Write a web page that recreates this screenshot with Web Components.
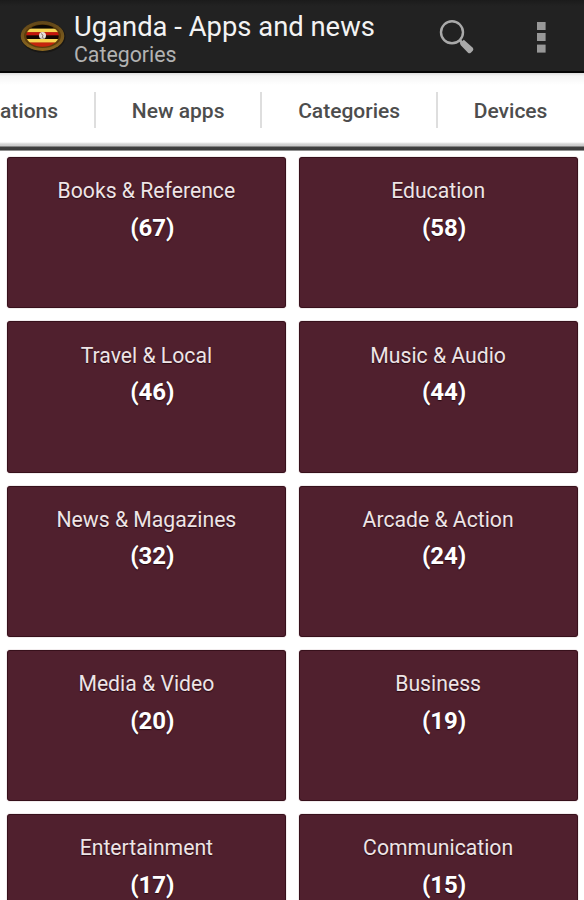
<!DOCTYPE html>
<html lang="en">
<head>
<meta charset="utf-8">
<title>Uganda - Apps and news</title>
<style>
  html, body {
    margin: 0;
    height: 900px;
    overflow: hidden;
    background: #fff;
    font-family: Roboto, "Liberation Sans", sans-serif;
  }
</style>
</head>
<body>
<category-page></category-page>

<script>
// Small helper so that every element gets its own shadow root
function attach(el, html) {
  const template = document.createElement('template');
  template.innerHTML = html;
  const root = el.attachShadow({ mode: 'open' });
  root.appendChild(template.content.cloneNode(true));
  return root;
}

// Oval flag badge in the action bar
class FlagLogo extends HTMLElement {
  constructor() {
    super();
    attach(this, `
      <style>
        :host { display: block; width: 46px; height: 34px; }
        svg { display: block; }
      </style>
      <svg width="46" height="34" viewBox="0 0 46 34">
        <defs>
          <clipPath id="oval"><ellipse cx="22.5" cy="15.8" rx="16.2" ry="11"/></clipPath>
          <linearGradient id="ring" x1="0" y1="0" x2="0" y2="1">
            <stop offset="0" stop-color="#604619"/>
            <stop offset="1" stop-color="#8c6820"/>
          </linearGradient>
        </defs>
        <ellipse cx="23" cy="16.8" rx="22.5" ry="15.8" fill="#191714"/>
        <ellipse cx="22.5" cy="16" rx="21.8" ry="14.9" fill="url(#ring)"/>
        <ellipse cx="22.5" cy="16" rx="18.5" ry="12" fill="#5c3d0c"/>
        <g clip-path="url(#oval)">
          <rect x="4" y="4" width="38" height="5" fill="#0c0804"/>
          <rect x="4" y="8.6" width="38" height="3.8" fill="#f8d552"/>
          <rect x="4" y="12.2" width="38" height="3.4" fill="#c4160d"/>
          <rect x="4" y="15.4" width="38" height="3.8" fill="#150703"/>
          <rect x="4" y="19" width="38" height="3.8" fill="#f8d552"/>
          <rect x="4" y="22.5" width="38" height="5" fill="#c4240d"/>
        </g>
        <circle cx="22.5" cy="15.6" r="3.5" fill="#e6dfdb"/>
        <path d="M21 13.5l2 1.7-.8 2.6 1.8.5" fill="none" stroke="#88736b" stroke-width="1"/>
      </svg>
    `);
  }
}

class ActionBar extends HTMLElement {
  constructor() {
    super();
    attach(this, `
      <style>
        :host {
          display: flex;
          align-items: flex-start;
          box-sizing: border-box;
          height: 73px;
          padding-left: 20px;
          background: linear-gradient(#1b1b1b, #222 6px);
          border-bottom: 2px solid #050505;
        }
        flag-logo { margin-top: 20px; }
        .text { flex: 1; padding: 11px 0 0 8px; white-space: nowrap; }
        .title { font-size: 27.4px; line-height: 32px; color: #f3f3f3; }
        .subtitle { font-size: 21.3px; line-height: 24px; color: #b2b2b2; }
        .search { margin: 18px 62px 0 0; }
        .menu { margin: 20px 38px 0 0; }
        svg { display: block; }
      </style>
      <flag-logo></flag-logo>
      <div class="text">
        <div class="title"><slot name="title"></slot></div>
        <div class="subtitle"><slot name="subtitle"></slot></div>
      </div>
      <svg class="search" width="36" height="38" viewBox="0 0 36 38">
        <circle cx="14" cy="14.3" r="11" fill="none" stroke="#a9a9a9" stroke-width="2.4"/>
        <path d="M21.2 21.8l3 3" stroke="#a9a9a9" stroke-width="3"/>
        <path d="M22 25.2l3.8-3.4 9 8q1.2 1.5 0 2.9l-2 2.1q-1.4 1.1-2.8 0l-7-7.4q-1-1.2-1-2.2z" fill="#a9a9a9"/>
      </svg>
      <svg class="menu" width="10" height="34" viewBox="0 0 10 34" fill="#989898">
        <rect x="1" y="2" width="8.6" height="8"/>
        <rect x="1" y="13" width="8.6" height="8"/>
        <rect x="1" y="24.6" width="8.6" height="8"/>
      </svg>
    `);
  }
}

class TabItem extends HTMLElement {
  constructor() {
    super();
    attach(this, `
      <style>
        :host {
          flex: none;
          display: flex;
          align-items: center;
          box-sizing: border-box;
          height: 36px;
          padding: 2px 36px 0 35.7px;
          border-left: 2px solid #dedede;
          font-size: 21px;
          font-weight: 500;
          color: #4d4d4d;
          white-space: nowrap;
        }
      </style>
      <slot></slot>
    `);
  }
}

class TabStrip extends HTMLElement {
  constructor() {
    super();
    attach(this, `
      <style>
        :host {
          display: flex;
          justify-content: flex-end;
          box-sizing: border-box;
          height: 78px;
          padding: 19px 0.6px 0 0;
          overflow: hidden;
          background: linear-gradient(#ddd, #f5f5f5 3px, #fff 12px, #fff 69px,
            #d4d4d4 71px, #c9c9c9 73px, #404040 74px, #3c3c3c 77px, #929292 77px);
        }
      </style>
      <slot></slot>
    `);
  }
}

class CategoryCard extends HTMLElement {
  constructor() {
    super();
    attach(this, `
      <style>
        :host {
          display: block;
          box-sizing: border-box;
          padding-top: 19.4px;
          border: 1px solid #37101b;
          border-radius: 3px;
          background: #50202e;
          text-align: center;
          box-shadow: 0 0 1px #7a4a57;
        }
        .name { font-size: 21.2px; line-height: 28px; color: #eee4e6; text-shadow: 0 1px 1px #280a12; }
        .count { margin-top: 8.6px; padding-left: 12px; font-size: 24px; line-height: 28px; font-weight: 700; color: #fff; text-shadow: 0 1px 1px #280a12; }
      </style>
      <div class="name"><slot></slot></div>
      <div class="count"></div>
    `);
  }

  connectedCallback() {
    this.shadowRoot.querySelector('.count').textContent = `(${this.getAttribute('count')})`;
  }
}

const categories = [
  ['Books & Reference', 67],
  ['Education', 58],
  ['Travel & Local', 46],
  ['Music & Audio', 44],
  ['News & Magazines', 32],
  ['Arcade & Action', 24],
  ['Media & Video', 20],
  ['Business', 19],
  ['Entertainment', 17],
  ['Communication', 15],
];

class CategoryPage extends HTMLElement {
  constructor() {
    super();
    const root = attach(this, `
      <style>
        :host { display: block; height: 900px; overflow: hidden; }
        tab-item:first-child { border: 0; }
        .grid {
          display: grid;
          grid-template-columns: 1fr 1fr;
          grid-auto-rows: 151.25px;
          gap: 13px;
          padding: 6px 6.5px 0 7px;
        }
      </style>
      <action-bar>
        <span slot="title">Uganda - Apps and news</span>
        <span slot="subtitle">Categories</span>
      </action-bar>
      <tab-strip>
        <tab-item>ations</tab-item>
        <tab-item>New apps</tab-item>
        <tab-item>Categories</tab-item>
        <tab-item>Devices</tab-item>
      </tab-strip>
      <div class="grid"></div>
    `);
    const grid = root.querySelector('.grid');
    categories.forEach(([name, count]) => {
      const card = document.createElement('category-card');
      card.setAttribute('count', count);
      card.textContent = name;
      grid.appendChild(card);
    });
  }
}

customElements.define('flag-logo', FlagLogo);
customElements.define('action-bar', ActionBar);
customElements.define('tab-item', TabItem);
customElements.define('tab-strip', TabStrip);
customElements.define('category-card', CategoryCard);
customElements.define('category-page', CategoryPage);
</script>
</body>
</html>
